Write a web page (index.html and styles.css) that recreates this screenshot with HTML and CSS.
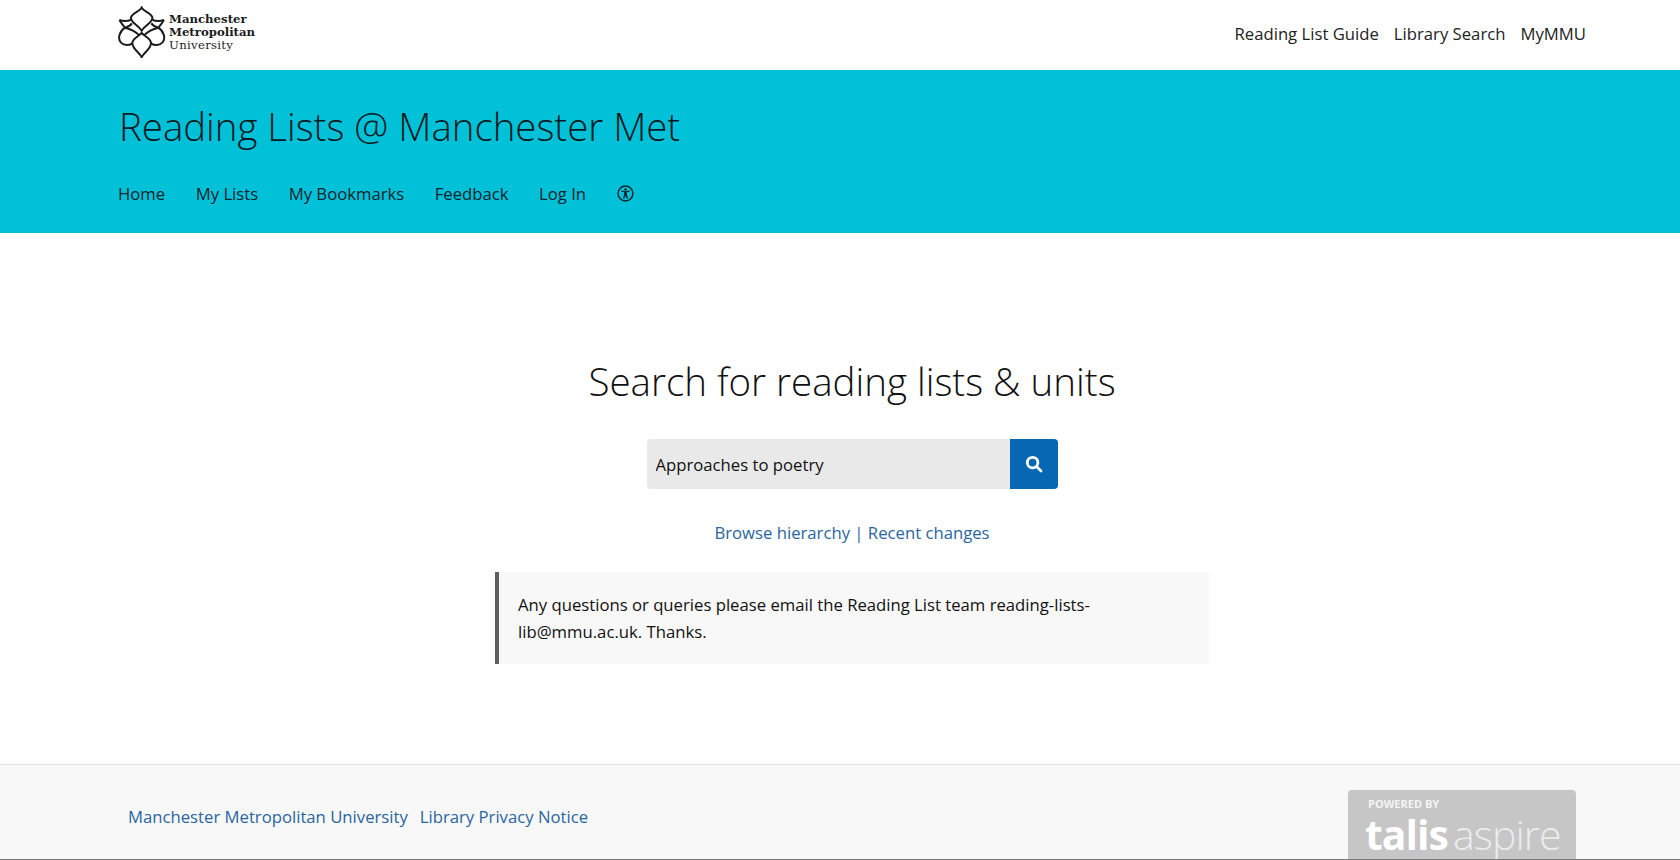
FILE: index.html
```html
<!DOCTYPE html>
<html lang="en">
<head>
<meta charset="utf-8">
<title>Reading Lists @ Manchester Met</title>
<link rel="stylesheet" href="styles.css">
</head>
<body>
<header class="topbar">
  <a class="brand" href="#">
    <svg class="brand-mark" viewBox="24 8 144 156" width="48" height="52" fill="none" stroke="#1c1c1c" stroke-width="6" stroke-linejoin="miter">
      <path d="M95 13 C90 25 68 27 63 42 C59 56 84 64 95 82 C106 64 131 56 127 42 C122 27 100 25 95 13Z"/>
      <path d="M95 162 C90 148 67 138 67 119 C67 106 84 100 95 89 C106 100 123 106 123 119 C123 138 100 148 95 162Z"/>
      <path d="M28 50 C40 54 52 54 62 50 M28 50 C33 58 38 65 45 73 C28 84 22 106 33 118 C43 128 58 126 67 120 M45 73 C58 76 76 84 88 96 M66 60 C62 66 55 70 45 73"/>
      <path d="M162 50 C150 54 138 54 128 50 M162 50 C157 58 152 65 145 73 C162 84 168 106 157 118 C147 128 132 126 123 120 M145 73 C132 76 114 84 102 96 M124 60 C128 66 135 70 145 73"/>
    </svg>
    <span class="brand-name"><b>Manchester</b><b>Metropolitan</b><span class="brand-sub">University</span></span>
  </a>
  <nav class="toplinks">
    <a href="#">Reading List Guide</a>
    <a href="#">Library Search</a>
    <a href="#">MyMMU</a>
  </nav>
</header>

<section class="banner">
  <h1>Reading Lists @ Manchester Met</h1>
  <nav class="mainnav">
    <a href="#">Home</a>
    <a href="#">My Lists</a>
    <a href="#">My Bookmarks</a>
    <a href="#">Feedback</a>
    <a href="#">Log In</a>
    <a href="#" class="a11y" aria-label="Accessibility">
      <svg viewBox="0 0 16 16" width="17" height="17">
        <circle cx="8" cy="8" r="7" fill="none" stroke="#10222c" stroke-width="1.4"/>
        <circle cx="8" cy="4.300" r="1.200" fill="#10222c"/>
        <path d="M3.800 6 L6.700 6.500 L6.700 9 L5.600 12.600 L7 12.800 L8 9.800 L9 12.800 L10.400 12.600 L9.300 9 L9.300 6.500 L12.200 6 L12 5.100 L8 5.800 L4 5.100Z" fill="#10222c"/>
      </svg>
    </a>
  </nav>
</section>

<main class="content">
  <h2>Search for reading lists &amp; units</h2>
  <form class="search">
    <input class="search-input" type="text" value="Approaches to poetry" aria-label="Search">
    <button class="search-btn" type="button" aria-label="Search">
      <svg viewBox="0 0 18 18" width="18" height="18" fill="none" stroke="#fff" stroke-width="2.800">
        <circle cx="7.600" cy="7.600" r="5.300"/>
        <path d="M11.500 11.500 L16 16" stroke-linecap="round"/>
      </svg>
    </button>
  </form>
  <p class="sublinks"><a href="#">Browse hierarchy</a> | <a href="#">Recent changes</a></p>
  <div class="notice">Any questions or queries please email the Reading List team reading-lists-lib@mmu.ac.uk. Thanks.</div>
</main>

<footer class="footer">
  <div class="footer-links">
    <a href="#">Manchester Metropolitan University</a>
    <a href="#">Library Privacy Notice</a>
  </div>
  <div class="talis">
    <span class="talis-by">POWERED BY</span>
    <span class="talis-name"><b>talis</b><span>aspire</span></span>
  </div>
</footer>
<div class="edge"></div>
</body>
</html>
```
FILE: styles.css
```css
* { box-sizing: border-box; }
html, body { margin: 0; height: 860px; overflow: hidden; }
body {
  position: relative;
  font-family: "Open Sans", sans-serif;
  font-size: 16.7px;
  color: #111;
  background: #fff;
}
a { text-decoration: none; color: inherit; }

.topbar {
  height: 70px;
  padding: 0 94px 0 118px;
  display: flex;
  align-items: center;
  justify-content: space-between;
}
.brand { display: flex; align-items: flex-start; gap: 3px; margin-top: -6px; }
.brand-name {
  display: flex;
  flex-direction: column;
  font-family: "DejaVu Serif", serif;
  font-size: 11.7px;
  line-height: 13px;
  color: #1c1c1c;
  padding-top: 6.500px;
}
.brand-sub { letter-spacing: 0.3px; }
.toplinks { display: flex; gap: 15px; color: #222; margin-top: -4px; }

.banner {
  height: 163px;
  background: #00c1d7;
  padding: 31px 119px 0 118px;
  color: #10222c;
}
.banner h1 {
  margin: 0 0 0 1px;
  font-size: 38.4px;
  font-weight: 300;
  line-height: 50px;
  color: #0a1a22;
}
.mainnav {
  display: flex;
  align-items: center;
  gap: 30.500px;
  margin-top: 31px;
  height: 22px;
}
.a11y { display: flex; }

.content {
  height: 531px;
  padding: 123px 0 0 24px;
  display: flex;
  flex-direction: column;
  align-items: center;
}
.content h2 {
  margin: 0;
  font-size: 38.5px;
  font-weight: 300;
  line-height: 50px;
  color: #111;
}
.search { display: flex; width: 411px; height: 50px; margin-top: 33px; }
.search-input {
  flex: 1;
  min-width: 0;
  border: 0;
  background: #e9e9e9;
  border-radius: 4px 0 0 4px;
  padding: 1px 9px 0;
  font: inherit;
  color: #111;
}
.search-btn {
  width: 48px;
  border: 0;
  padding: 0;
  background: #0767b3;
  border-radius: 0 4px 4px 0;
  display: flex;
  align-items: center;
  justify-content: center;
}
.sublinks { margin: 32px 0 0; line-height: 24px; color: #2a659f; }
.notice {
  width: 714px;
  margin-top: 27px;
  padding: 19px 40px 19px 19px;
  border-left: 4px solid #5f5f5f;
  background: #f8f8f8;
  line-height: 27px;
  color: #111;
}

.footer {
  height: 96px;
  border-top: 1px solid #e0e0e0;
  background: #f8f8f8;
  padding: 25px 104px 0 128px;
  display: flex;
  justify-content: space-between;
  align-items: flex-start;
}
.footer-links { display: flex; gap: 12px; margin-top: 15px; color: #2a659f; }
.talis {
  width: 228px;
  height: 90px;
  background: #c6c6c6;
  border-radius: 4px;
  padding: 6px 20px;
  color: #fff;
  display: flex;
  flex-direction: column;
}
.talis-by { font-size: 11px; font-weight: 700; line-height: 16px; color: #f4f4f4; }
.talis-name { display: flex; align-items: baseline; gap: 5px; font-size: 41px; line-height: 45px; margin-left: -3px; }
.talis-name b { font-weight: 700; letter-spacing: -1px; }
.talis-name span { font-weight: 300; color: #ececec; letter-spacing: -0.9px; }
.edge { position: absolute; left: 0; right: 0; bottom: 0; height: 1px; background: #7a7a7a; }
```
